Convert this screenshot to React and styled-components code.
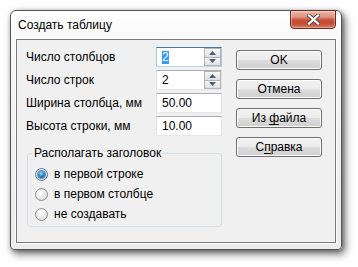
import React from 'react';
import styled, { createGlobalStyle } from 'styled-components';

const Global = createGlobalStyle`
  html, body { margin: 0; padding: 0; background: #ffffff; }
  body {
    font-family: "Liberation Sans", Arial, sans-serif;
    font-size: 12px;
    color: #000;
  }
`;

const Page = styled.div`
  box-sizing: border-box;
  width: 358px;
  height: 267px;
  padding: 10px 0 0 10px;
  overflow: hidden;
`;

const Window = styled.div`
  box-sizing: border-box;
  width: 332px;
  height: 240px;
  display: flex;
  flex-direction: column;
  padding: 0 5px 6px 5px;
  border: 1px solid #555;
  border-radius: 6px 6px 4px 4px;
  background: linear-gradient(180deg, #ffffff 0%, #f7f7f7 14%, #efefef 60%, #ebebeb 100%);
  box-shadow: 3px 4px 8px rgba(0, 0, 0, 0.55), 1px 1px 4px rgba(0, 0, 0, 0.3);
`;

const TitleBar = styled.div`
  height: 28px;
  display: flex;
  justify-content: space-between;
  align-items: flex-start;
`;

const Title = styled.div`
  padding: 7px 0 0 2px;
  line-height: 14px;
  font-size: 12px;
  color: #000;
`;

const CloseButton = styled.div`
  box-sizing: border-box;
  width: 46px;
  height: 19px;
  margin-top: -1px;
  display: flex;
  align-items: center;
  justify-content: center;
  border: 1px solid #6b2a1e;
  border-radius: 0 0 4px 4px;
  background: linear-gradient(180deg, #eab8a9 0%, #dd9581 35%, #c9523a 52%, #c44a32 70%, #d8785f 100%);
  box-shadow: inset 0 0 0 1px rgba(255, 255, 255, 0.35);
`;

const Client = styled.div`
  flex: 1;
  display: flex;
  align-items: flex-start;
  gap: 14px;
  padding: 7px 13px 0 9px;
  border: 1px solid #7b7b7b;
  background: #f0f0f0;
  box-shadow: 0 0 0 1px rgba(255, 255, 255, 0.85);
`;

const LeftColumn = styled.div`
  width: 196px;
  display: flex;
  flex-direction: column;
`;

const FormGrid = styled.div`
  display: grid;
  grid-template-columns: 130px 66px;
  grid-auto-rows: 20px;
  row-gap: 3px;
  align-items: center;
`;

const Label = styled.div`
  line-height: 14px;
  white-space: nowrap;
`;

const TextBox = styled.div`
  box-sizing: border-box;
  height: 20px;
  display: flex;
  align-items: center;
  padding-left: 5px;
  padding-right: ${p => p.$spin ? '0' : '2px'};
  background: #fff;
  border: 1px solid;
  border-color: ${p => p.$focused ? '#3d7bad #a4c9e3 #b7d9ed #a4c9e3' : '#abadb3 #e2e3ea #e3e9ef #dbdfe6'};
  line-height: 14px;
`;

const Value = styled.span`
  flex: 1;
`;

const Selected = styled.span`
  background: #3399ff;
  color: #fff;
  line-height: 13px;
  display: inline-block;
`;

const SpinColumn = styled.div`
  align-self: stretch;
  width: 17px;
  display: flex;
  flex-direction: column;
`;

const SpinButton = styled.div`
  flex: 1;
  box-sizing: border-box;
  display: flex;
  align-items: center;
  justify-content: center;
  border: 1px solid #b4b4b4;
  ${p => p.$down ? 'border-top: none;' : ''}
  background: linear-gradient(180deg, #f6f6f6 0%, #ececec 50%, #dedede 100%);
`;

const GroupBox = styled.fieldset`
  box-sizing: border-box;
  width: 195px;
  height: 81px;
  margin: 10px 0 0 1px;
  padding: 4px 0 2px 7px;
  border: 1px solid #d5dfe5;
  border-radius: 3px;
  display: flex;
  flex-direction: column;
  min-width: 0;
`;

const Legend = styled.legend`
  margin-left: -2px;
  padding: 0 1px;
  line-height: 14px;
  font-size: 12px;
  color: #000;
`;

const RadioRow = styled.div`
  height: 20px;
  display: flex;
  align-items: center;
  gap: 6px;
  line-height: 14px;
`;

const RadioCircle = styled.span`
  box-sizing: border-box;
  width: 13px;
  height: 13px;
  border-radius: 50%;
  display: flex;
  align-items: center;
  justify-content: center;
  border: 1px solid ${p => p.$checked ? '#4f7fa6' : '#8f8f8f'};
  background: radial-gradient(circle at 40% 35%, #ffffff 0%, #ececec 45%, #cfcfcf 100%);
`;

const RadioDot = styled.span`
  width: 7px;
  height: 7px;
  border-radius: 50%;
  background: radial-gradient(circle at 45% 35%, #9fe0ff 0%, #2c8ad0 45%, #0f4f8e 100%);
  box-shadow: 0 0 0 1px rgba(16, 60, 110, 0.55);
`;

const RightColumn = styled.div`
  width: 86px;
  display: flex;
  flex-direction: column;
  gap: 9px;
  padding-top: 3px;
`;

const Button = styled.div`
  box-sizing: border-box;
  height: 20px;
  display: flex;
  align-items: center;
  justify-content: center;
  border: 1px solid #707070;
  border-radius: 3px;
  background: linear-gradient(180deg, #f2f2f2 0%, #ebebeb 50%, #dddddd 50%, #cfcfcf 100%);
  box-shadow: inset 0 0 0 1px #fbfbfb;
  line-height: 14px;
  color: #000;
`;

const Caption = styled.span`
  white-space: pre;
  text-decoration: none;
`;

const Mnemonic = styled.span`
  display: inline-block;
  line-height: 13px;
  box-shadow: inset 0 -1px 0 #000;
`;

const Arrow = ({ down }) => (
  <svg width="7" height="4" viewBox="0 0 7 4">
    <path d={down ? 'M0 0 L7 0 L3.5 4 Z' : 'M0 4 L7 4 L3.5 0 Z'} fill="#4c607a" />
  </svg>
);

const CloseX = () => (
  <svg width="13" height="11" viewBox="0 0 13 11">
    <path d="M2 1.5 L11 9.5 M11 1.5 L2 9.5" stroke="#5a4a46" strokeWidth="4" strokeLinecap="square" />
    <path d="M2 1.5 L11 9.5 M11 1.5 L2 9.5" stroke="#ffffff" strokeWidth="2.2" strokeLinecap="square" />
  </svg>
);

const Spinner = ({ value, focused }) => (
  <TextBox $focused={focused} $spin>
    <Value>{focused ? <Selected>{value}</Selected> : value}</Value>
    <SpinColumn>
      <SpinButton><Arrow /></SpinButton>
      <SpinButton $down><Arrow down /></SpinButton>
    </SpinColumn>
  </TextBox>
);

const Radio = ({ checked, children }) => (
  <RadioRow>
    <RadioCircle $checked={checked}>{checked && <RadioDot />}</RadioCircle>
    <span>{children}</span>
  </RadioRow>
);

export default function App() {
  return (
    <Page>
      <Global />
      <Window>
        <TitleBar>
          <Title>Создать таблицу</Title>
          <CloseButton><CloseX /></CloseButton>
        </TitleBar>
        <Client>
          <LeftColumn>
            <FormGrid>
              <Label>Число столбцов</Label>
              <Spinner value="2" focused />
              <Label>Число строк</Label>
              <Spinner value="2" />
              <Label>Ширина столбца, мм</Label>
              <TextBox>50.00</TextBox>
              <Label>Высота строки, мм</Label>
              <TextBox>10.00</TextBox>
            </FormGrid>
            <GroupBox>
              <Legend>Располагать заголовок</Legend>
              <Radio checked>в первой строке</Radio>
              <Radio>в первом столбце</Radio>
              <Radio>не создавать</Radio>
            </GroupBox>
          </LeftColumn>
          <RightColumn>
            <Button><Caption>OK</Caption></Button>
            <Button><Caption>Отмена</Caption></Button>
            <Button><Caption>{'Из '}<Mnemonic>ф</Mnemonic>айла</Caption></Button>
            <Button><Caption>С<Mnemonic>п</Mnemonic>равка</Caption></Button>
          </RightColumn>
        </Client>
      </Window>
    </Page>
  );
}
